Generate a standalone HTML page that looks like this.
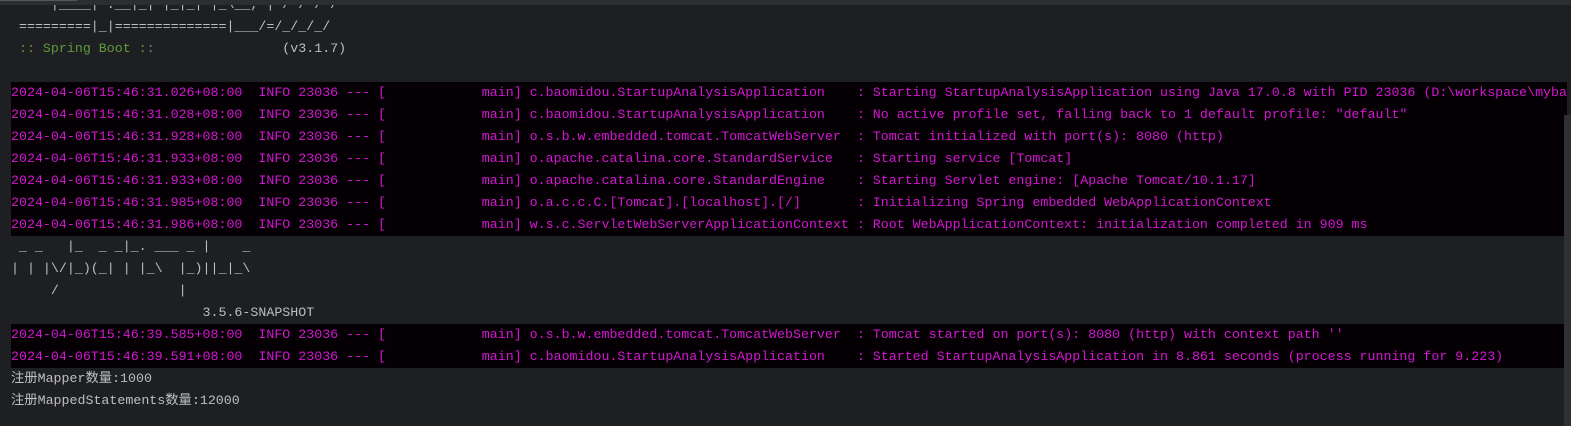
<!DOCTYPE html>
<html><head><meta charset="utf-8"><style>
html,body{margin:0;padding:0;width:1571px;height:426px;overflow:hidden;background:#1e1f22;}
.top{position:absolute;left:0;top:0;width:1571px;height:5px;background:#2b2d30;z-index:2;}
.top2{position:absolute;left:0;top:0;width:77px;height:1px;background:#55575c;z-index:3;}
.sb{position:absolute;left:1564px;top:115px;width:7px;height:311px;background:#2f3033;}
.c{position:absolute;left:11px;top:-6px;width:1556px;overflow:hidden;font-family:"Liberation Mono","Noto Sans CJK SC",monospace;font-size:13.3px;color:#bcbec4;}
.l{height:22px;line-height:22px;white-space:pre;overflow:hidden;}
.d{background:#050003;color:#d317d3;}
.g{color:#5f9a3a;}
</style></head><body>
<div class="top"></div><div class="top2"></div>
<div class="c"><div class="l">  '  |____| .__|_| |_|_| |_\__, | / / / /</div><div class="l"> =========|_|==============|___/=/_/_/_/</div><div class="l"><span class="g"> :: Spring Boot ::</span>                (v3.1.7)</div><div class="l"> </div><div class="l d">2024-04-06T15:46:31.026+08:00  INFO 23036 --- [            main] c.baomidou.StartupAnalysisApplication    : Starting StartupAnalysisApplication using Java 17.0.8 with PID 23036 (D:\workspace\mybatis</div><div class="l d">2024-04-06T15:46:31.028+08:00  INFO 23036 --- [            main] c.baomidou.StartupAnalysisApplication    : No active profile set, falling back to 1 default profile: "default"</div><div class="l d">2024-04-06T15:46:31.928+08:00  INFO 23036 --- [            main] o.s.b.w.embedded.tomcat.TomcatWebServer  : Tomcat initialized with port(s): 8080 (http)</div><div class="l d">2024-04-06T15:46:31.933+08:00  INFO 23036 --- [            main] o.apache.catalina.core.StandardService   : Starting service [Tomcat]</div><div class="l d">2024-04-06T15:46:31.933+08:00  INFO 23036 --- [            main] o.apache.catalina.core.StandardEngine    : Starting Servlet engine: [Apache Tomcat/10.1.17]</div><div class="l d">2024-04-06T15:46:31.985+08:00  INFO 23036 --- [            main] o.a.c.c.C.[Tomcat].[localhost].[/]       : Initializing Spring embedded WebApplicationContext</div><div class="l d">2024-04-06T15:46:31.986+08:00  INFO 23036 --- [            main] w.s.c.ServletWebServerApplicationContext : Root WebApplicationContext: initialization completed in 909 ms</div><div class="l"> _ _   |_  _ _|_. ___ _ |    _</div><div class="l">| | |\/|_)(_| | |_\  |_)||_|_\</div><div class="l">     /               |</div><div class="l">                        3.5.6-SNAPSHOT</div><div class="l d">2024-04-06T15:46:39.585+08:00  INFO 23036 --- [            main] o.s.b.w.embedded.tomcat.TomcatWebServer  : Tomcat started on port(s): 8080 (http) with context path ''</div><div class="l d">2024-04-06T15:46:39.591+08:00  INFO 23036 --- [            main] c.baomidou.StartupAnalysisApplication    : Started StartupAnalysisApplication in 8.861 seconds (process running for 9.223)</div><div class="l">注册Mapper数量:1000</div><div class="l">注册MappedStatements数量:12000</div></div>
<div class="sb"></div>
</body></html>
